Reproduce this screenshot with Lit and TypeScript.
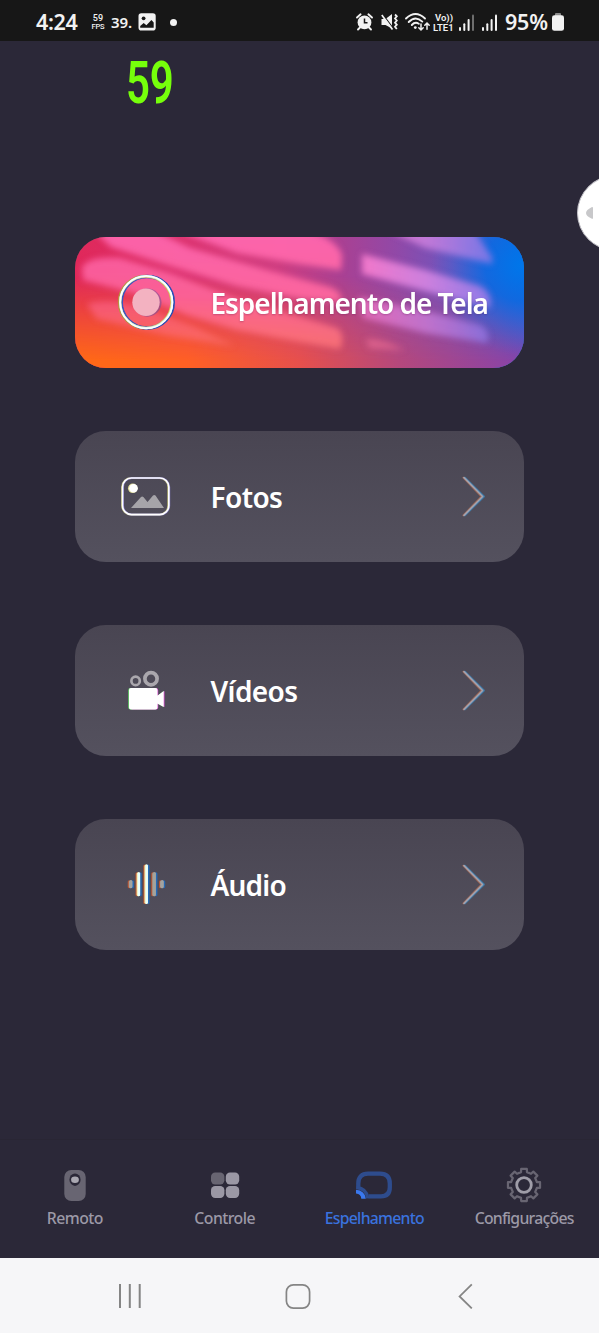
import { LitElement, html, svg, css } from "lit";
import { customElement, property } from "lit/decorators.js";

@customElement("status-bar")
class StatusBar extends LitElement {
  static styles = css`
    :host { display: flex; height: 41px; box-sizing: border-box; padding: 3px 35px 0 36px; align-items: center; background: #171717; color: #f2f2f2; white-space: nowrap; }
    svg { display: block; flex: none; overflow: visible; }
    .clock { width: 55px; margin-top: -2px; font-size: 21.5px; font-weight: 600; letter-spacing: -0.35px; }
    .stack { width: 20px; display: flex; flex-direction: column; font: 500 9px/9px Roboto, sans-serif; }
    .fps { width: 14px; display: flex; flex-direction: column; align-items: center; gap: 1px; }
    .fps-num { font-size: 9px; line-height: 8px; letter-spacing: 0.2px; }
    .fps-label { font-size: 7.5px; line-height: 8px; letter-spacing: -0.1px; }
    .temp { width: 27px; font-size: 15px; font-weight: 600; letter-spacing: -0.1px; }
    .dot { margin-left: 14px; width: 7px; height: 7px; border-radius: 50%; background: #f2f2f2; }
    .right { margin-left: auto; display: flex; align-items: center; }
    .alarm { margin-right: 8px; }
    .mute { margin-right: 7px; }
    .wifi { margin-right: 3px; }
    .volte { width: 26px; display: flex; flex-direction: column; font: 600 9.5px/9px Roboto, sans-serif; gap: 1px; align-items: flex-start; }
    .vo { padding-left: 2px; }
    .signal { margin-right: 7px; }
    .percent { width: 47px; margin-top: -2px; font-size: 21.5px; font-weight: 600; letter-spacing: -0.2px; }
  `;
  signal(faded: boolean) {
    return html`<svg class="signal" width="16" height="17" viewBox="0 0 16 17" fill="#f2f2f2">
      <rect x="0" y="13" width="2" height="4" rx="1" /><rect x="4.3" y="9.3" width="2" height="7.7" rx="1" />
      <rect x="8.6" y="5" width="2" height="12" rx="1" /><rect x="13" y="0.5" width="2" height="16.5" rx="1" opacity=${faded ? 0.4 : 1} /></svg>`;
  }
  render() {
    return html`
      <span class="clock">4:24</span>
      <span class="stack"><span class="fps"><span class="fps-num">59</span><span class="fps-label">FPS</span></span></span>
      <span class="temp">39.</span>
      <svg width="18" height="18" viewBox="0 0 18 18">
        <rect x="0.5" y="0.3" width="17.2" height="17.2" rx="2.8" fill="#f2f2f2" />
        <circle cx="5.6" cy="5.3" r="1.9" fill="#171717" />
        <path d="M2.2 14.8V13l3.5-3 2.7 2.2 5-5.2 2.3 2.4v5.4z" fill="#171717" />
      </svg>
      <span class="dot"></span>
      <div class="right">
        <svg class="alarm" width="17" height="18" viewBox="0 0 17 18">
          <circle cx="8.5" cy="9.4" r="6.9" fill="#f2f2f2" />
          <path d="M1 4.5L4.6 1.3M16 4.5L12.4 1.3M4 14.5L2 16.5M13 14.5L15 16.5" stroke="#f2f2f2" stroke-width="1.9" stroke-linecap="round" />
          <path d="M8.5 5.4v4.4h3" fill="none" stroke="#171717" stroke-width="1.5" />
        </svg>
        <svg class="mute" width="17" height="18" viewBox="0 0 17 18">
          <path d="M.5 6h4L11 1v14.5L4.5 12h-4z" fill="#f2f2f2" />
          <path d="M1.8 1.4L12.3 15.4" stroke="#171717" stroke-width="1.1" />
          <path d="M.8 2L11.5 16.6" stroke="#f2f2f2" stroke-width="1.7" />
          <path d="M14 1.5l1.8 1.8L14 5.5l1.8 2L14 9.7l1.8 2-1.8 2 1.8 2.3" fill="none" stroke="#f2f2f2" stroke-width="1.8" />
        </svg>
        <svg class="wifi" width="25" height="18" viewBox="0 0 25 18" fill="none" stroke="#f2f2f2" stroke-linecap="round">
          <path d="M1 5.5Q10.5-3.5 20 5.5M3.7 9Q10.5 2 17.3 8.6M6.8 12Q10 8.5 13.8 10.7" stroke-width="1.9" />
          <circle cx="10.3" cy="14.6" r="1.4" fill="#f2f2f2" stroke="none" />
          <path d="M16 11v6M13.8 14.7l2.2 2.3 2.2-2.3M22 16.2v-6M19.8 12.3L22 10l2.2 2.3" stroke-width="1.5" />
        </svg>
        <span class="volte"><span class="vo">Vo))</span><span>LTE1</span></span>
        ${this.signal(true)}${this.signal(false)}
        <span class="percent">95%</span>
        <svg width="12" height="18" viewBox="0 0 12 18"><rect x="3" width="6" height="4" rx="1" fill="#8a8a8a" /><rect y="2.2" width="12" height="15.6" rx="2.4" fill="#f2f2f2" /></svg>
      </div>`;
  }
}

@customElement("menu-card")
class MenuCard extends LitElement {
  @property() icon = "";
  @property() label = "";
  static styles = css`
    :host { display: block; height: 130.8px; }
    .card { position: relative; display: flex; align-items: center; height: 100%; border-radius: 31px; overflow: hidden; background: linear-gradient(#494552, #54515e); }
    .art { position: absolute; inset: 0; }
    svg { display: block; flex: none; }
    .glyph { position: relative; margin-left: 41px; overflow: visible; }
    .label { position: relative; flex: 1; margin-left: 34.5px; font-size: 28px; line-height: 40px; font-weight: 600; color: #fff; white-space: nowrap; padding-top: 2px; letter-spacing: -0.8px; }
    .label.photos, .label.videos { letter-spacing: -0.6px; }
    .label.mirror { letter-spacing: -1.05px; text-shadow: 0 1px 2px rgba(90, 20, 80, 0.3); }
    .arrow { margin-right: 37px; margin-top: 1px; }
  `;
  art() {
    return html`<svg class="art" width="449" height="131" viewBox="0 0 449 131" preserveAspectRatio="none">
      <defs>
        <linearGradient id="across"><stop offset="0" stop-color="#e0285a" /><stop offset=".25" stop-color="#db3370" /><stop offset=".45" stop-color="#cf3d80" /><stop offset=".6" stop-color="#a84194" /><stop offset=".72" stop-color="#9049a8" /><stop offset=".84" stop-color="#7055bd" /><stop offset=".94" stop-color="#3a60d0" /><stop offset="1" stop-color="#0a71e6" /></linearGradient>
        <linearGradient id="floor"><stop offset="0" stop-color="#ff6a14" /><stop offset=".25" stop-color="#ff6024" /><stop offset=".5" stop-color="#e7504c" /><stop offset=".72" stop-color="#b5487c" /><stop offset="1" stop-color="#8643aa" /></linearGradient>
        <linearGradient id="fade" x2="0" y2="1"><stop offset=".3" stop-color="#000" /><stop offset=".95" stop-color="#fff" /></linearGradient>
        <mask id="lower"><rect width="449" height="131" fill="url(#fade)" /></mask>
        <radialGradient id="blue" cx="446" cy="28" r="90" gradientUnits="userSpaceOnUse"><stop offset="0" stop-color="#0076ea" /><stop offset=".4" stop-color="#0a6ae2" stop-opacity=".85" /><stop offset="1" stop-color="#4561d0" stop-opacity="0" /></radialGradient>
        <linearGradient id="rose" x2="0" y2="131" gradientUnits="userSpaceOnUse"><stop offset="0" stop-color="#fd66ae" /><stop offset=".45" stop-color="#ff68a0" /><stop offset=".75" stop-color="#ff7380" /><stop offset="1" stop-color="#ff7b68" /></linearGradient>
        <linearGradient id="lilac" x1="285" x2="420" gradientUnits="userSpaceOnUse"><stop offset="0" stop-color="#f67acb" /><stop offset=".5" stop-color="#cf82e0" /><stop offset="1" stop-color="#8d7ae8" /></linearGradient>
        <filter id="soft" x="-20%" y="-20%" width="140%" height="140%"><feGaussianBlur stdDeviation="3.4" /></filter>
      </defs>
      <rect width="449" height="131" fill="url(#across)" />
      <rect width="449" height="131" fill="url(#floor)" mask="url(#lower)" />
      <rect width="449" height="131" fill="url(#blue)" />
      <g filter="url(#soft)">
        <path fill="url(#rose)" opacity=".95" d="M92-10H225Q262 2 267 18L266 33 225 27 162 16Z" />
        <path fill="url(#rose)" opacity=".92" d="M15-10H72L115 11 195 34 255 50Q268 55 266 65L228 62 162 49 95 29 36 10Z" />
        <path fill="url(#rose)" opacity=".82" d="M7 30Q14 19 45 21L95 36 162 62 225 80 262 91Q271 98 265 112L225 105 162 93 112 78 62 57 8 43Z" />
        <path fill="url(#rose)" opacity=".55" d="M12 67Q36 60 75 73L120 90 160 109 95 99 22 82Z" />
        <path fill="url(#lilac)" opacity=".8" d="M310-8H398L417 20V27L350 11Z" />
        <path fill="url(#lilac)" opacity=".95" d="M287 17L350 33 405 49Q418 56 415 71L350 54 287 37Z" />
        <path fill="url(#lilac)" opacity=".7" d="M284 60L350 74 405 88Q416 94 412 106L350 96 288 81Z" />
        <path fill="#e0648e" opacity=".85" d="M291 102Q306 101 330 113L294 111Z" />
      </g>
    </svg>`;
  }
  glyph() {
    switch (this.icon) {
      case "mirror":
        return html`<svg class="glyph" width="60" height="60" viewBox="0 0 60 60" fill="none">
          <circle cx="29.2" cy="30.2" r="26.2" stroke="#b9953f" stroke-width="2.4" /><circle cx="31.5" cy="30.2" r="26.2" stroke="#2b4cb6" stroke-width="2.6" />
          <circle cx="30.9" cy="30.2" r="25" stroke="#3b55c0" stroke-width="2" /><circle cx="29.8" cy="30.2" r="25.3" stroke="#e8c05c" stroke-width="1.6" />
          <circle cx="30.2" cy="30.2" r="26" stroke="#cdf5e6" stroke-width="2.2" /><circle cx="30.3" cy="30.2" r="26.2" stroke="#fff" stroke-width="1.6" />
          <circle cx="31.4" cy="30.6" r="14.1" fill="#7a5098" opacity=".6" /><circle cx="30" cy="30.2" r="13.7" fill="#f3b2c1" /></svg>`;
      case "photos":
        return html`<svg class="glyph" width="60" height="60" viewBox="0 0 60 60" fill="none">
          <rect x="6.1" y="12" width="46.2" height="36.6" rx="9" stroke="#b5b36b" stroke-width="2" />
          <rect x="7" y="12" width="46.2" height="36.6" rx="9" stroke="#8178c4" stroke-width="2" />
          <rect x="6.5" y="12" width="46.3" height="36.6" rx="9" stroke="#fff" stroke-width="1.7" />
          <circle cx="16.8" cy="22.3" r="4.8" fill="#e2df9a" /><circle cx="17.5" cy="22.3" r="4.3" fill="#fff" />
          <path d="M15 42L25 31q1.2-1 2.4 0L31.5 36 37 29.5q1.3-1.2 2.5 0L48 42z" fill="#a6a4a9" /></svg>`;
      case "videos":
        return html`<svg class="glyph" width="60" height="60" viewBox="0 0 60 60" fill="none">
          <circle cx="19.6" cy="20.9" r="4.2" stroke="#aaa7ad" stroke-width="2.7" /><circle cx="35" cy="18.7" r="6.1" stroke="#aaa7ad" stroke-width="3.7" />
          <path d="M14.5 28H39q2.2 0 2.2 2.2V47.5q0 2-2.2 2H14.5q-2.2 0-2.2-2V30.2q0-2.2 2.2-2.2zM41 36.5l6.5-5.5V47L41 43.5z" fill="#65e66a" />
          <path d="M16 28H40q2.2 0 2.2 2.2V47.5q0 2-2.2 2H16zM42 36.5l6.5-5.5V47L42 43.5z" fill="#dc55d4" />
          <path d="M15 28H39.3q2.2 0 2.2 2.2V47.5q0 2-2.2 2H15q-2 0-2-2V30.2q0-2.2 2-2.2zM41 36l6.7-5V47L41 43.3z" fill="#fff" /></svg>`;
      default:
        return html`<svg class="glyph" width="60" height="60" viewBox="0 0 60 60">
          ${[[14.5, 8, "#a3a3a0"], [22.3, 24, "#fff"], [30.1, 39.5, "#fff"], [38, 24, "#a3a39c"], [45.8, 8, "#a3a3a0"]].map(([x, h, c]) => svg`
            <rect x=${+x - 2.8} y=${30.2 - +h / 2} width="3" height=${h} rx="1.5" fill="#b95532" />
            <rect x=${+x + 0.2} y=${30.2 - +h / 2} width="3.2" height=${h} rx="1.5" fill="#2469b8" />
            <rect x=${+x - 1.7} y=${30.2 - +h / 2} width="3.6" height=${h} rx="1.6" fill=${c === "#fff" ? "#f6edaa" : c} />
            <rect x=${+x - 0.6} y=${30.2 - +h / 2} width="2.3" height=${h} rx="1.1" fill=${c === "#fff" ? "#e7ffff" : c} />`)}</svg>`;
    }
  }
  render() {
    const mirror = this.icon === "mirror";
    return html`<div class="card">
      ${mirror ? this.art() : null}${this.glyph()}
      <span class="label ${this.icon}">${this.label}</span>
      ${mirror ? null : html`<svg class="arrow" width="26" height="42" viewBox="0 0 26 42" fill="none" stroke-linecap="round" stroke-linejoin="round">
        <path d="M2.3 1.7L20.5 20.5 2.3 39.3" stroke="#9a6250" stroke-width="1.8" /><path d="M3.9 1.7L22.9 20.5 3.9 39.3" stroke="#3f7cab" stroke-width="1.9" />
        <path d="M3 1.7L21.6 20.5 3 39.3" stroke="#a3a1ad" stroke-width="1.7" /></svg>`}
    </div>`;
  }
}

const gearPath = (() => {
  const points: string[] = [];
  for (let i = 0; i < 8; i++) {
    for (const [offset, radius] of [[-13, 13.2], [-10, 16.3], [10, 16.3], [13, 13.2]]) {
      const a = ((i * 45 + offset) * Math.PI) / 180;
      points.push(`${(18 + radius * Math.sin(a)).toFixed(2)} ${(18 - radius * Math.cos(a)).toFixed(2)}`);
    }
  }
  return "M" + points.join("L") + "Z";
})();

@customElement("tab-bar")
class TabBar extends LitElement {
  static styles = css`
    :host { display: grid; grid-template-columns: repeat(4, 1fr); height: 119px; box-sizing: border-box; padding-top: 27px; background: #2b2838; border-top: 1px solid #292634; }
    .tab { display: flex; flex-direction: column; align-items: center; gap: 3px; color: #9c99a7; font-size: 15.8px; line-height: 24px; white-space: nowrap; font-weight: 500; letter-spacing: -0.75px; }
    .tab.short { letter-spacing: -0.55px; }
    .active { color: #3a72de; }
    svg { display: block; width: 36px; height: 36px; overflow: visible; }
  `;
  render() {
    return html`
      <div class="tab short"><svg viewBox="0 0 36 36"><rect x="7.3" y="3" width="21.4" height="31" rx="7" fill="#686572" /><ellipse cx="18" cy="12.7" rx="5.6" ry="6.2" fill="#2b2838" /><ellipse cx="18" cy="12.7" rx="3.9" ry="3.2" fill="#aaa8b2" /></svg>Remoto</div>
      <div class="tab short"><svg viewBox="0 0 36 36" fill="#9b98a5"><rect x="4" y="5.5" width="13.4" height="12" rx="4.2" fill="#686572" /><rect x="18.8" y="5.5" width="13.4" height="12" rx="4.2" /><rect x="4" y="19" width="13.4" height="12" rx="4.2" /><rect x="18.8" y="19" width="13.4" height="12" rx="4.2" /></svg>Controle</div>
      <div class="tab active"><svg viewBox="0 0 36 36"><path d="M2.3 22V16.5Q2.3 6.7 12 6.7H24Q33.8 6.7 33.8 16.5V20.5Q33.8 29.3 25 29.3H12.5" fill="none" stroke="#2e4c8d" stroke-width="4.3" /><path d="M.5 20.5Q10.7 21.5 11.7 31.3" fill="none" stroke="#2e4c8d" stroke-width="3.4" /><path d="M0 22.7Q9 23.5 9.8 31.7H5.3Q5 26.7 0 26.5Z" fill="#3a78ee" /></svg>Espelhamento</div>
      <div class="tab"><svg viewBox="0 0 36 36" fill="none"><path d=${gearPath} stroke="#686572" stroke-width="2.2" stroke-linejoin="round" /><circle cx="18" cy="18" r="7.3" stroke="#9f9da8" stroke-width="2.8" /></svg>Configurações</div>`;
  }
}

@customElement("app-root")
class AppRoot extends LitElement {
  static styles = css`
    :host { position: relative; display: flex; flex-direction: column; height: 1333px; width: 599px; overflow: hidden; background: #2b2838; font-family: "Noto Sans", sans-serif; }
    .counter { position: absolute; left: 125.5px; top: 47px; font: 600 60px/72px Roboto, sans-serif; color: #76ff0b; transform: scaleX(0.7); transform-origin: 0 0; letter-spacing: -0.5px; }
    .handle { position: absolute; left: 577px; top: 175px; width: 78px; height: 76px; border-radius: 50%; box-sizing: border-box; background: #fff; border: 1px solid #c2c1c7; }
    .handle svg { display: block; margin: 30px 0 0 8px; }
    .menu { flex: 1; display: flex; flex-direction: column; gap: 63.2px; padding: 196px 75px 0; }
    .system { height: 75px; flex: none; background: #f6f6f8; display: grid; grid-template-columns: 1fr 167px 1fr; align-items: center; }
    .system svg { display: block; justify-self: center; }
    .system .recents { justify-self: end; margin-right: 73px; }
    .system .back { justify-self: start; margin-left: 74px; }
    .system .home { margin-right: 4px; }
  `;
  render() {
    return html`
      <status-bar></status-bar>
      <main class="menu">
        <menu-card icon="mirror" label="Espelhamento de Tela"></menu-card>
        <menu-card icon="photos" label="Fotos"></menu-card>
        <menu-card icon="videos" label="Vídeos"></menu-card>
        <menu-card icon="audio" label="Áudio"></menu-card>
      </main>
      <tab-bar></tab-bar>
      <div class="system">
        <svg class="recents" width="26" height="26" viewBox="0 0 26 26" stroke="#858585" stroke-width="2"><path d="M3 1v24M12.8 1v24M22.7 1v24" /></svg>
        <svg class="home" width="26" height="26" viewBox="0 0 26 26" fill="none" stroke="#858585" stroke-width="1.7"><rect x="1.4" y="1.9" width="23.2" height="23.2" rx="7" /></svg>
        <svg class="back" width="18" height="26" viewBox="0 0 18 26" fill="none" stroke="#858585" stroke-width="1.8"><path d="M14.8 1.4L2.6 13.4 14.8 25.4" /></svg>
      </div>
      <div class="counter">59</div>
      <div class="handle"><svg width="8" height="14" viewBox="0 0 8 14"><path d="M7 1.8V12.2Q7 13.3 5.5 12.6Q0 10 0 7Q0 4 5.5 1.2Q7 .6 7 1.8Z" fill="#c8c8ca" /></svg></div>`;
  }
}
